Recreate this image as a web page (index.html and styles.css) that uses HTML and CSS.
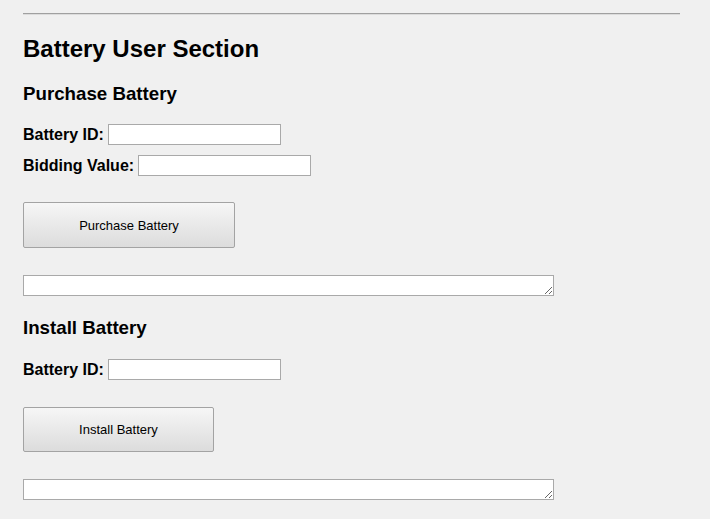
FILE: index.html
```html
<!DOCTYPE html>
<html lang="en">
<head>
<meta charset="utf-8">
<title>Battery User Section</title>
<link rel="stylesheet" href="styles.css">
</head>
<body>
<div class="page">
  <hr class="rule">
  <h2 class="title">Battery User Section</h2>

  <section class="block">
    <h3 class="subtitle">Purchase Battery</h3>
    <div class="fields">
      <div class="field"><label class="label" for="pid">Battery ID:</label><input class="input" id="pid" type="text"></div>
      <div class="field"><label class="label" for="bid">Bidding Value:</label><input class="input" id="bid" type="text"></div>
    </div>
    <button class="btn btn-purchase" type="button">Purchase Battery</button>
    <textarea class="output"></textarea>
  </section>

  <section class="block block-install">
    <h3 class="subtitle">Install Battery</h3>
    <div class="fields">
      <div class="field"><label class="label" for="iid">Battery ID:</label><input class="input" id="iid" type="text"></div>
    </div>
    <button class="btn btn-install" type="button">Install Battery</button>
    <textarea class="output"></textarea>
  </section>
</div>
</body>
</html>
```

FILE: styles.css
```css
html, body {
  margin: 0;
  padding: 0;
  background: #f0f0f0;
}

body {
  font-family: "Liberation Sans", Arial, sans-serif;
  color: #000;
}

.page {
  width: 657px;
  padding: 13px 0 0 23px;
  display: flex;
  flex-direction: column;
  align-items: flex-start;
}

.rule {
  align-self: stretch;
  margin: 0;
  height: 0;
  border: 0;
  border-top: 1px solid #a0a0a0;
  border-bottom: 1px solid #dcdcdc;
}

.title {
  margin: 20px 0 0;
  font-size: 24px;
  line-height: 28px;
  font-weight: bold;
}

.block {
  display: flex;
  flex-direction: column;
  align-items: flex-start;
  margin-top: 20px;
}

.block-install {
  margin-top: 21px;
}

.subtitle {
  margin: 0;
  font-size: 18.72px;
  line-height: 22px;
  font-weight: bold;
}

.fields {
  display: flex;
  flex-direction: column;
  gap: 10px;
  margin-top: 19px;
}

.block-install .fields {
  margin-top: 20px;
}

.field {
  display: flex;
  align-items: center;
  gap: 4px;
  height: 21px;
}

.label {
  font-size: 16px;
  font-weight: bold;
  line-height: 18px;
}

.input {
  box-sizing: border-box;
  width: 173px;
  height: 21px;
  margin: 0;
  padding: 1px 2px;
  border: 1px solid #a9a9a9;
  background: #fff;
  font: 13.33px "Liberation Sans", Arial, sans-serif;
}

.btn {
  box-sizing: border-box;
  margin: 26px 0 0;
  padding: 0;
  border: 1px solid #a3a3a3;
  border-radius: 2px;
  background: linear-gradient(#f6f6f6, #dcdcdc);
  font: 13px "Liberation Sans", Arial, sans-serif;
  color: #000;
}

.btn-purchase {
  width: 212px;
  height: 46px;
}

.btn-install {
  width: 191px;
  height: 45px;
  margin-top: 27px;
}

.output {
  box-sizing: border-box;
  display: block;
  width: 531px;
  height: 21px;
  margin: 27px 0 0;
  padding: 1px 2px;
  border: 1px solid #a9a9a9;
  background: #fff;
  font: 13.33px "Liberation Mono", monospace;
}
```
